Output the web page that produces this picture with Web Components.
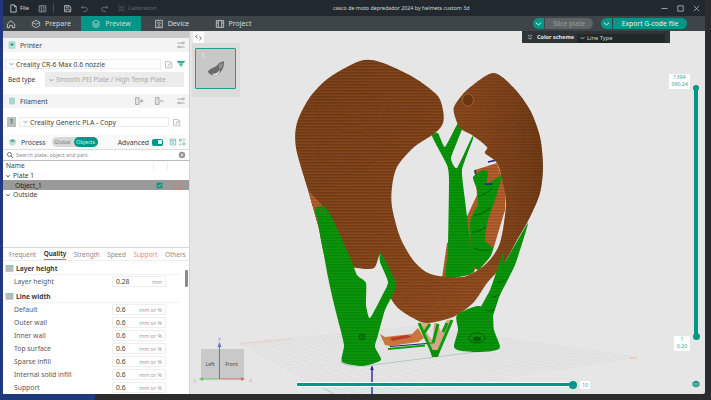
<!DOCTYPE html>
<html>
<head>
<meta charset="utf-8">
<style>
html, body { margin: 0; height: 100%; overflow: hidden; }
body { background: linear-gradient(90deg, #1f3a7c 95px, #2b2c2e 95px); font-family: "Noto Sans", "Open Sans", sans-serif; }
</style>
</head>
<body>
<app-window></app-window>

<script>
const ICONS = {
  file: '<path d="M3 1.500h6l3 3v9H3zM9 1.500v3h3" fill="none" stroke="currentColor" stroke-width="1.300"/>',
  panel: '<path d="M2 3h11v10H2zM5.500 3v10M8 5.500h3M8 8h3M8 10.500h3" fill="none" stroke="currentColor" stroke-width="1.200"/>',
  save: '<path d="M2.500 2.500h8l2.500 2.500v8h-10.500zM5 2.500v3h5v-3M5 13v-4.500h5.500v4.500" fill="none" stroke="currentColor" stroke-width="1.200"/>',
  undo: '<path d="M5 3 2.500 5.500 5 8M2.500 5.500h6a3.500 3.500 0 0 1 0 7h-3" fill="none" stroke="currentColor" stroke-width="1.200"/>',
  redo: '<path d="M10 3l2.500 2.500L10 8M12.500 5.500h-6a3.500 3.500 0 0 0 0 7h3" fill="none" stroke="currentColor" stroke-width="1.200"/>',
  calib: '<path d="M3 4.500V3h1.500M10.500 3H12v1.500M12 10.500V12h-1.500M4.500 12H3v-1.500M5 5h5v5H5z" fill="none" stroke="currentColor" stroke-width="1.100"/>',
  home: '<path d="M2 7.500 7.500 2.500 13 7.500V13H9.500V9.500h-4V13H2z" fill="none" stroke="currentColor" stroke-width="1.200"/>',
  cube: '<path d="M7.500 2 13 5v5l-5.500 3L2 10V5zM2 5l5.500 3L13 5" fill="none" stroke="currentColor" stroke-width="1.100"/>',
  layers: '<path d="M7.500 2 13 5 7.500 8 2 5zM2 7.500l5.500 3 5.500-3M2 10l5.500 3 5.500-3" fill="none" stroke="currentColor" stroke-width="1.100"/>',
  device: '<path d="M2.500 2h10v11h-10zM5 10.500h5M7.500 4.500a1.800 1.800 0 1 0 .01 0" fill="none" stroke="currentColor" stroke-width="1.200"/>',
  project: '<path d="M2 2.500h11v10H2zM5 2.500v10M10 2.500v10M2.500 6h2M10.500 6h2" fill="none" stroke="currentColor" stroke-width="1.200"/>',
  sliders: '<path d="M2 4.500h7M12 4.500h1M2 10.500h1M6 10.500h7" fill="none" stroke="currentColor" stroke-width="1.100"/><circle cx="10.500" cy="4.500" r="1.500" fill="none" stroke="currentColor"/><circle cx="4.500" cy="10.500" r="1.500" fill="none" stroke="currentColor"/>',
  edit: '<path d="M2.500 2.500h8M2.500 2.500v10.500h10.500V6M6.500 9 12 3.500l1 1L7.500 10H6.500z" fill="none" stroke="currentColor" stroke-width="1.200"/>',
  wifi: '<path d="M1.500 3h12l-2.500 3.500h-7zM5 8h5l-1.300 2.200H6.300zM7.500 11v2.500" fill="currentColor" stroke="currentColor" stroke-width=".6"/>',
  printer: '<path d="M2 1.500h11v12H2z" fill="#bfe4de" stroke="#7fbdb3"/><path d="M5 4.500h5v3l-2.500 2-2.500-2z" fill="#12937f"/>',
  filament: '<path d="M3 2h9v11H3z" fill="#bfe4de" stroke="#7fbdb3"/><path d="M5.500 2v11M9.500 2v11" stroke="#7fbdb3" fill="none"/>',
  add: '<path d="M2.500 2.500h5v10h-5zM4.500 5.500h1M4.500 9h1M9 7.500h5M11.500 5v5" fill="none" stroke="currentColor" stroke-width="1.200"/>',
  remove: '<path d="M2.500 2.500h5v10h-5zM4.500 5.500h1M4.500 9h1M9 7.500h5" fill="none" stroke="currentColor" stroke-width="1.200"/>',
  process: '<path d="M7.500 1.500 13 4.500v6l-5.500 3-5.500-3v-6z" fill="#c9dedb"/><path d="M2 4.500l5.500 3 5.500-3-5.500-3z" fill="#5fb3a6"/>',
  table: '<path d="M2.500 2h10v11h-10zM2.500 5h10M5 7.500h5M5 10h5" fill="none" stroke="#3aa090" stroke-width="1"/>',
  arrange: '<path d="M2.500 2.500h3.500v3.500h-3.500zM9 9h3.500v3.500H9zM9 2.500h3.500M2.500 12.500H6M11 5l1.500-1.500M4 10l-1.500 1.500" fill="none" stroke="#3aa090" stroke-width="1.100"/>',
  search: '<circle cx="6.500" cy="6.500" r="3.800" fill="none" stroke="currentColor" stroke-width="1.500"/><path d="m9.500 9.500 3.500 3.500" stroke="currentColor" stroke-width="1.800"/>',
  clear: '<circle cx="7.500" cy="7.500" r="6" fill="currentColor"/><path d="m5 5 5 5m0-5-5 5" stroke="#fff" stroke-width="1.200"/>',
  paint: '<circle cx="7" cy="7.500" r="4.800" fill="none" stroke="#e8743b" stroke-width="1.200" stroke-dasharray="3 1"/><circle cx="11.500" cy="11.500" r="2" fill="#e8743b"/>',
  check: '<path d="M1.500 1.500h12v12h-12z" fill="#12937f"/><path d="m4.500 7.500 2.200 2.200 4-4.200" fill="none" stroke="#fff" stroke-width="1.200"/>',
  heading: '<path d="M1 2h13v11H1z" fill="#c6c6c6"/><path d="M1 2h13v2.500H1z" fill="#7fc4b8"/><path d="M1 6.500h13M1 9h13M1 11.500h13" stroke="#9a9a9a" stroke-width=".7"/>',
  collapse: '<path d="M3.500 3.500 7.500 6.500 11.500 3.500M3.500 8.500 7.500 11.500 11.500 8.500" fill="none" stroke="currentColor" stroke-width="1.200"/>',
  min: '<path d="M2.500 7.500h10" stroke="currentColor" stroke-width="1.200"/>',
  max: '<path d="M3 3h9v9H3z" fill="none" stroke="currentColor" stroke-width="1.200"/>',
  close: '<path d="m3 3 9 9m0-9-9 9" stroke="currentColor" stroke-width="1.200"/>',
  codes: '<path d="M6 3 2.500 6 6 9M9 6l3.500 3L9 12" fill="none" stroke="currentColor" stroke-width="1.200"/>',
  stack: '<path d="M7.500 1 14 4v7l-6.500 3L1 11V4z" fill="#12937f"/><path d="M3 5.500l4.500 2 4.500-2M3 8.500l4.500 2 4.500-2" fill="none" stroke="#fff" stroke-width=".9"/>'
};

// closed curve through the points, k is how round it gets
function curve(pts, k) {
  const n = pts.length;
  let d = `M${pts[0][0]} ${pts[0][1]}`;
  for (let i = 0; i < n; i++) {
    const p0 = pts[(i + n - 1) % n], p1 = pts[i], p2 = pts[(i + 1) % n], p3 = pts[(i + 2) % n];
    const c1 = [p1[0] + (p2[0] - p0[0]) * k, p1[1] + (p2[1] - p0[1]) * k];
    const c2 = [p2[0] - (p3[0] - p1[0]) * k, p2[1] - (p3[1] - p1[1]) * k];
    d += `C${c1[0].toFixed(1)} ${c1[1].toFixed(1)} ${c2[0].toFixed(1)} ${c2[1].toFixed(1)} ${p2[0]} ${p2[1]}`;
  }
  return d + 'Z';
}

// small icon element, 15 unit grid
class UiIcon extends HTMLElement {
  connectedCallback() {
    const size = this.getAttribute('size') || 10;
    this.attachShadow({mode: 'open'}).innerHTML = `
      <style>:host { display: inline-flex; flex: none; width: ${size}px; height: ${size}px; }</style>
      <svg width="${size}" height="${size}" viewBox="0 0 15 15">${ICONS[this.getAttribute('name')] || ''}</svg>`;
  }
}

class TitleBar extends HTMLElement {
  connectedCallback() {
    this.attachShadow({mode: 'open'}).innerHTML = `
      <style>
        :host { display: flex; align-items: center; height: 16px; background: #22292e; color: #d8dcdc; font-size: 5.600px; position: relative; }
        .left { display: flex; align-items: center; padding-left: 6px; width: 324px; box-sizing: content-box; flex: none; }
        .file { margin-left: 2px; margin-right: 9px; }
        .sep { width: 1px; height: 10px; background: #454b4f; margin: 0 9px 0 6px; }
        ui-icon.dim { color: #7d8487; margin-right: 11px; }
        .cal { color: #62696c; margin-left: 2px; }
        .title { flex: none; width: 135px; text-align: center; font-size: 5.300px; white-space: nowrap; color: #d5d9d9; }
        .win { margin-left: auto; display: flex; gap: 7px; padding-right: 4px; color: #c8cccc; }
      </style>
      <div class="left">
        <ui-icon name="file" size="9"></ui-icon><span class="file">File</span>
        <ui-icon name="panel" size="9" style="color:#a9aeb0"></ui-icon>
        <span class="sep"></span>
        <ui-icon name="save" size="9" style="color:#c8cccc;margin-right:8px"></ui-icon>
        <ui-icon class="dim" name="undo" size="9"></ui-icon>
        <ui-icon class="dim" name="redo" size="9" style="margin-right:8px"></ui-icon>
        <ui-icon name="calib" size="9" style="color:#62696c"></ui-icon><span class="cal">Calibration</span>
      </div>
      <div class="title">casco de moto depredador 2024 by helmets custom 3d</div>
      <div class="win">
        <ui-icon name="min" size="9"></ui-icon><ui-icon name="max" size="9"></ui-icon><ui-icon name="close" size="9"></ui-icon>
      </div>`;
  }
}

class NavTab extends HTMLElement {
  connectedCallback() {
    const on = this.hasAttribute('active');
    this.attachShadow({mode: 'open'}).innerHTML = `
      <style>
        :host { display: flex; align-items: center; justify-content: center; gap: 4px; height: 100%; font-size: 7px; color: #d7dbdb;
          background: ${on ? '#009688' : 'transparent'}; width: ${this.getAttribute('w')}px; }
      </style>
      <ui-icon name="${this.getAttribute('icon')}" size="10"></ui-icon><span><slot></slot></span>`;
  }
}

class ActionButton extends HTMLElement {
  connectedCallback() {
    const off = this.hasAttribute('disabled');
    this.attachShadow({mode: 'open'}).innerHTML = `
      <style>
        :host { display: flex; height: 11px; width: ${this.getAttribute('w')}px; border-radius: 6px; overflow: hidden; font-size: 6.800px; }
        .arrow { width: 11px; background: #009688; display: flex; align-items: center; justify-content: center; margin-right: 1px; }
        .label { flex: 1; display: flex; align-items: center; justify-content: center; line-height: 11px;
          background: ${off ? '#5e6365' : '#009688'}; color: ${off ? '#9b9fa0' : '#e8f5f3'}; }
        svg { display: block; }
      </style>
      <div class="arrow"><svg width="7" height="4" viewBox="0 0 7 4"><path d="M.8.6 3.500 3 6.200.6" fill="none" stroke="#e8f5f3" stroke-width="1"/></svg></div>
      <div class="label"><slot></slot></div>`;
  }
}

class TabBar extends HTMLElement {
  connectedCallback() {
    this.attachShadow({mode: 'open'}).innerHTML = `
      <style>
        :host { display: flex; align-items: center; height: 15px; background: #3d4548; position: relative; }
        .home { width: 15px; padding-left: 3px; color: #d7dbdb; display: flex; }
        .actions { position: absolute; left: 530px; top: 2px; display: flex; gap: 8px; }
      </style>
      <div class="home"><ui-icon name="home" size="10"></ui-icon></div>
      <nav-tab icon="cube" w="60">Prepare</nav-tab>
      <nav-tab icon="layers" w="60" active>Preview</nav-tab>
      <nav-tab icon="device" w="61">Device</nav-tab>
      <nav-tab icon="project" w="62">Project</nav-tab>
      <div class="actions">
        <action-button w="60" disabled>Slice plate</action-button>
        <action-button w="86">Export G-code file</action-button>
      </div>`;
  }
}

class SectionHead extends HTMLElement {
  connectedCallback() {
    this.attachShadow({mode: 'open'}).innerHTML = `
      <style>
        :host { display: flex; align-items: center; height: 14px; background: #f4f4f4; color: #3c4144; font-size: 6.800px; padding: 0 3px 0 5px; gap: 4px; }
        .end { margin-left: auto; display: flex; gap: 6px; color: #8b9092; }
      </style>
      <ui-icon name="${this.getAttribute('icon')}" size="8"></ui-icon>
      <span>${this.getAttribute('label')}</span>
      <div class="end"><slot></slot></div>`;
  }
}

class SelectBox extends HTMLElement {
  connectedCallback() {
    const off = this.hasAttribute('disabled');
    this.attachShadow({mode: 'open'}).innerHTML = `
      <style>
        :host { display: flex; align-items: center; flex: 1; min-width: 0; box-sizing: border-box; gap: 2px; padding-left: 3px; white-space: nowrap;
          height: ${off ? 15 : 10}px; font-size: ${off ? 6.600 : 6.800}px; color: ${off ? '#a9a9a9' : '#3c4144'};
          background: ${off ? '#ececec' : '#fff'}; border: 1px solid #ececec; }
        svg { flex: none; }
      </style>
      <svg width="5" height="4" viewBox="0 0 5 4"><path d="M.5 1 2.500 3 4.500 1" fill="none" stroke="#8a8a8a" stroke-width=".8"/></svg>
      <slot></slot>`;
  }
}

class ModeSwitch extends HTMLElement {
  connectedCallback() {
    this.attachShadow({mode: 'open'}).innerHTML = `
      <style>
        :host { display: flex; width: 46px; height: 10px; border-radius: 5px; background: #d8d8d8; font-size: 5.400px; line-height: 10px; margin-left: 6px; }
        span { flex: 1; text-align: center; color: #7e7e7e; border-radius: 5px; }
        .on { background: #009688; color: #d8f0ec; flex: 0 0 24px; }
      </style>
      <span>Global</span><span class="on">Objects</span>`;
  }
}

class ListRow extends HTMLElement {
  connectedCallback() {
    const sel = this.hasAttribute('selected');
    this.attachShadow({mode: 'open'}).innerHTML = `
      <style>
        :host { display: flex; align-items: center; height: 9.700px; font-size: 6.600px; color: ${sel ? '#222' : '#3c4144'};
          background: ${sel ? '#9a9a9a' : '#fff'}; padding-left: ${this.getAttribute('indent') || 3}px; position: relative; }
        svg { margin-right: 3px; }
        .end { margin-left: auto; display: flex; gap: 10px; padding-right: 7px; align-items: center; }
        .cols { margin-left: auto; display: flex; gap: 13px; padding-right: 21px; }
        .cols i { width: 1px; height: 8px; background: #efefef; }
      </style>
      ${this.hasAttribute('caret') ? '<svg width="4" height="4" viewBox="0 0 4 4"><path d="M.3 1 2 3 3.700 1" fill="none" stroke="#444" stroke-width=".8"/></svg>' : ''}
      <slot></slot>
      ${this.hasAttribute('head') ? '<div class="cols"><i></i><i></i></div>' : '<div class="end"><slot name="end"></slot></div>'}`;
  }
}

class ParamRow extends HTMLElement {
  connectedCallback() {
    this.attachShadow({mode: 'open'}).innerHTML = `
      <style>
        :host { display: flex; align-items: center; height: 13px; font-size: 6.800px; color: #56595b; padding-left: 11px; }
        .label { width: 98px; flex: none; white-space: nowrap; }
        .box { width: 54px; height: 11px; box-sizing: border-box; border: 1px solid #eeeeee; display: flex; align-items: center; padding: 0 3px; color: #444; background: #fff; border-radius: 1px; }
        .unit { margin-left: auto; font-size: 5.400px; color: #9b9b9b; white-space: nowrap; }
      </style>
      <span class="label"><slot></slot></span>
      <div class="box"><span>${this.getAttribute('value')}</span><span class="unit">${this.getAttribute('unit')}</span></div>`;
  }
}

class ParamHead extends HTMLElement {
  connectedCallback() {
    this.attachShadow({mode: 'open'}).innerHTML = `
      <style>
        :host { display: flex; align-items: center; gap: 2px; height: 14px; font-size: 6.600px; font-weight: 700; color: #3c4144; padding-left: 2px; position: relative; }
        i { position: absolute; left: 5px; right: 9px; bottom: 0; height: 1px; background: #f0f0f0; }
      </style>
      <ui-icon name="heading" size="9"></ui-icon><slot></slot><i></i>`;
  }
}

class SidePanel extends HTMLElement {
  connectedCallback() {
    const rows = ['Default', 'Outer wall', 'Inner wall', 'Top surface', 'Sparse infill', 'Internal solid infill', 'Support'];
    this.attachShadow({mode: 'open'}).innerHTML = `
      <style>
        :host { display: flex; flex-direction: column; width: 187px; flex: none; background: #fff; overflow: hidden; border-right: 1px solid #d2d2d2; box-sizing: border-box; position: relative; }
        .strip { height: 7px; background: #c9c9c9; flex: none; }
        .printer { display: flex; align-items: center; gap: 3px; padding: 7px 3px 0 2px; }
        .bed { display: flex; align-items: center; padding: 3px 5px 0 5px; font-size: 6.600px; color: #3c4144; }
        .bed span { width: 37px; flex: none; }
        .fil { display: flex; align-items: center; gap: 3px; padding: 9px 8px 0 4px; }
        .num { width: 9px; height: 10px; background: #bdbdbd; font-size: 6.400px; color: #333; text-align: center; line-height: 10px; flex: none; }
        .gray { color: #a8a8a8; }
        .proc { display: flex; align-items: center; height: 14px; margin-top: 8px; padding: 0 3px 0 5px; font-size: 6.800px; color: #3c4144; background: #fafafa; }
        .proc .p { margin-left: 4px; }
        .proc .adv { margin-left: auto; margin-right: 3px; }
        .sw { width: 11px; height: 7px; border-radius: 2px; background: #009688; margin-right: 6px; position: relative; }
        .sw::after { content: ""; position: absolute; right: 1.500px; top: 1.500px; width: 4px; height: 4px; background: #dff; border-radius: 1px; }
        .search { display: flex; align-items: center; height: 10px; border-top: 1px solid #ddd; border-bottom: 1px solid #bbb; padding: 0 3px; gap: 2px; font-size: 5.300px; color: #8e8e8e; }
        .search ui-icon:last-child { margin-left: auto; color: #8f9496; }
        .list { height: 86px; flex: none; border-bottom: 1px solid #d8d8d8; background: #fff; }
        .tabs { display: flex; height: 12px; align-items: center; font-size: 6.400px; color: #8a8a8a; padding-left: 6px; gap: 7.500px; border-bottom: 1px solid #eeeeee; flex: none; white-space: nowrap; }
        .tabs span.cur { color: #222; font-weight: 600; border-bottom: 1px solid #e8693a; line-height: 10px; }
        .tabs span.warn { color: #ef8b6a; }
        .params { flex: 1; overflow: hidden; position: relative; }
        .second { margin-top: 1px; }
        .bar { position: absolute; left: 182px; top: 9px; width: 3px; height: 17px; background: #8a8a8a; border-radius: 1px; }
      </style>
      <div class="strip"></div>
      <section-head icon="printer" label="Printer"><ui-icon name="sliders" size="10"></ui-icon></section-head>
      <div class="printer">
        <select-box>Creality CR-6 Max 0.6 nozzle</select-box>
        <ui-icon name="edit" size="9" class="gray"></ui-icon>
        <ui-icon name="wifi" size="10" style="color:#3aa899"></ui-icon>
      </div>
      <div class="bed"><span>Bed type</span><select-box disabled>Smooth PEI Plate / High Temp Plate</select-box></div>
      <section-head icon="filament" label="Filament" style="margin-top:7px">
        <ui-icon name="add" size="10" style="margin-right:4px"></ui-icon>
        <ui-icon name="remove" size="10" style="margin-right:6px"></ui-icon>
        <ui-icon name="sliders" size="10"></ui-icon>
      </section-head>
      <div class="fil">
        <div class="num">1</div>
        <select-box>Creality Generic PLA - Copy</select-box>
        <ui-icon name="edit" size="9" class="gray"></ui-icon>
      </div>
      <div class="proc">
        <ui-icon name="process" size="9"></ui-icon><span class="p">Process</span>
        <mode-switch></mode-switch>
        <span class="adv">Advanced</span><span class="sw"></span>
        <ui-icon name="table" size="8" style="margin-right:1px"></ui-icon><ui-icon name="arrange" size="8"></ui-icon>
      </div>
      <div class="search"><ui-icon name="search" size="8" style="color:#555"></ui-icon><span>Search plate, object and part.</span><ui-icon name="clear" size="8"></ui-icon></div>
      <div class="list">
        <list-row head>Name</list-row>
        <list-row caret>Plate 1</list-row>
        <list-row selected indent="12">Object_1<ui-icon slot="end" name="check" size="7"></ui-icon><ui-icon slot="end" name="paint" size="9"></ui-icon></list-row>
        <list-row caret>Outside</list-row>
      </div>
      <div class="tabs"><span>Frequent</span><span class="cur">Quality</span><span>Strength</span><span>Speed</span><span class="warn">Support</span><span>Others</span></div>
      <div class="params">
        <param-head>Layer height</param-head>
        <param-row value="0.28" unit="mm">Layer height</param-row>
        <param-head class="second">Line width</param-head>
        ${rows.map(r => `<param-row value="0.6" unit="mm or %">${r}</param-row>`).join('')}
        <div class="bar"></div>
      </div>`;
  }
}

class ModelScene extends HTMLElement {
  connectedCallback() {
    // bed grid from its four corners
    const A = [240, 343], B = [420, 326], C = [637, 357], D = [349, 403];
    const mix = (p, q, t) => [p[0] + (q[0] - p[0]) * t, p[1] + (q[1] - p[1]) * t];
    let grid = '';
    for (let i = 0; i <= 26; i++) {
      const t = i / 26;
      const a = mix(A, B, t), b = mix(D, C, t), c = mix(A, D, t), d = mix(B, C, t);
      grid += `M${a[0].toFixed(1)} ${a[1].toFixed(1)}L${b[0].toFixed(1)} ${b[1].toFixed(1)}M${c[0].toFixed(1)} ${c[1].toFixed(1)}L${d[0].toFixed(1)} ${d[1].toFixed(1)}`;
    }
    const shell = curve([[296,148],[297,123],[310,97],[330,77],[360,61],[380,62],[413,77],[437,95],[443,110],[443,123],[435,133],[413,148],[397,167],[392,187],[392,207],[400,237],[413,260],[428,273],[447,277],[467,276],[487,263],[500,243],[506,205],[503,183],[497,163],[485,153],[487,147],[472,135],[460,128],[454,113],[455,105],[467,90],[493,73],[513,87],[530,110],[540,137],[543,167],[540,193],[530,217],[517,240],[503,265],[487,283],[473,303],[453,317],[427,323],[413,318],[397,307],[387,290],[392,280],[381,254],[374,268],[357,268],[328,262],[318,225],[308,190]], .14);
    const column = curve([[432,136],[438,133],[445,147],[458,123],[462,129],[451,158],[457,168],[472,137],[473,139],[462,170],[465,200],[470,240],[474,272],[446,278],[448,250],[449,180],[447,165]], .08);
    const cluster = curve([[473,177],[483,170],[488,172],[487,184],[502,175],[498,190],[495,200],[488,220],[485,240],[493,248],[490,257],[478,270],[472,260],[470,223],[475,210],[478,205],[477,190]], .1);
    const leftLeg = curve([[315,208],[325,207],[333,220],[350,257],[357,275],[366,283],[366,305],[370,318],[382,296],[388,282],[380,262],[381,253],[396,285],[385,310],[378,335],[375,347],[381,360],[363,366],[342,362],[344,345],[338,320],[333,300],[328,277],[318,223]], .1);
    const spike = curve([[504,250],[505,262],[528,223],[515,265],[500,295],[492,318],[482,324],[477,315],[490,290],[497,270]], .08);
    const rightLeg = curve([[457,315],[478,306],[492,313],[494,330],[500,347],[492,351],[477,352],[462,351],[454,347],[458,330]], .12);
    this.attachShadow({mode: 'open'}).innerHTML = `
      <style>:host { position: absolute; inset: 0; display: block; } svg { display: block; }</style>
      <svg width="515" height="363" viewBox="190 31 515 363">
        <defs>
          <pattern id="br" width="6" height="1.500" patternUnits="userSpaceOnUse"><rect width="6" height="1.500" fill="#884a1e"/><rect width="6" height=".75" fill="#6a3613"/></pattern>
          <pattern id="brl" width="6" height="1.500" patternUnits="userSpaceOnUse"><rect width="6" height="1.500" fill="#b9652f"/><rect width="6" height=".6" fill="#94491f"/></pattern>
          <pattern id="gr" width="6" height="1.500" patternUnits="userSpaceOnUse"><rect width="6" height="1.500" fill="#0b9c0b"/><rect width="6" height=".6" fill="#067c06"/></pattern>
          <clipPath id="shellClip"><path d="${shell}"/></clipPath>
          <linearGradient id="shade" x1="0" y1="0" x2=".7" y2="1"><stop offset="0" stop-color="#3c2008" stop-opacity=".1"/><stop offset=".6" stop-color="#b55f2a" stop-opacity=".08"/><stop offset="1" stop-color="#c46a30" stop-opacity=".3"/></linearGradient>
          <linearGradient id="shadeR" x1="0" y1="0" x2="1" y2=".2"><stop offset="0" stop-color="#b55f2a" stop-opacity=".15"/><stop offset="1" stop-color="#3a1e06" stop-opacity=".32"/></linearGradient>
        </defs>
        <path d="${grid}" stroke="#dbdbdb" stroke-width=".5" fill="none"/>
        <path d="M240 344 290 339" stroke="#efc9b4" stroke-width="1.200" stroke-dasharray="2 1"/>
        <path d="M630 358h7" stroke="#efc9b4" stroke-width="1.500"/>
        <path d="M323 388 336 395" stroke="#9fcdbb" stroke-width=".8"/>
        <path d="M372 367V394" stroke="#2a2a96" stroke-width="1.400"/>
        <path d="M372 365l-1.800 5h3.600z" fill="#2a2a96"/>
        <path d="M340 362C344 366 360 368 380 364L500 349 497 345" fill="none" stroke="#a9c3b9" stroke-width=".8"/>

        <!-- raft under the helmet -->
        <path d="M380 334 385 337 412 334 418 328 424 338 418 342 390 346 385 345z" fill="#c8763a"/>
        <path d="M390 338 392 341 412 337 407 335z" fill="#b93a2a"/>
        <path d="M390 346.500 433 343" stroke="#20208a" stroke-width="1.200"/>
        <path d="M388 349 425 345.500" stroke="#0a9e0a" stroke-width="2"/>

        <!-- cavity behind the ring -->
        <path d="M475 170 497 163 506 190 505 210 493 250 470 275 442 278 447 243 456 240 470 210 477 195z" fill="url(#brl)"/>

        <!-- centre column -->
        <path d="${column}" fill="url(#gr)"/>

        <!-- cluster in the cavity -->
        <path d="${cluster}" fill="url(#gr)"/>
        <path d="M478 196q8-1 14-8M474 215q8 0 16-7M472 232q7 0 14-5M474 248q5 3 16 2" stroke="#056505" stroke-width="1.100" fill="none"/>
        <path d="M488 162 497 160M475 170l.5 4M485 184h7" stroke="#23238f" stroke-width="1.700" fill="none"/>

        <!-- helmet shell -->
        <path d="${shell}" fill="url(#br)"/>
        <g clip-path="url(#shellClip)">
          <rect x="290" y="55" width="260" height="275" fill="url(#shade)"/>
          <rect x="452" y="65" width="95" height="200" fill="url(#shadeR)"/>
          <g fill="none" stroke="#5f300f" stroke-width=".7" opacity=".28">
            <ellipse cx="352" cy="108" rx="26" ry="17"/><ellipse cx="352" cy="108" rx="15" ry="9"/><ellipse cx="352" cy="108" rx="36" ry="24"/>
            <ellipse cx="350" cy="150" rx="32" ry="18"/><ellipse cx="420" cy="300" rx="26" ry="14"/><ellipse cx="420" cy="300" rx="14" ry="7"/>
            <ellipse cx="420" cy="300" rx="38" ry="20"/><ellipse cx="510" cy="140" rx="14" ry="20"/><ellipse cx="490" cy="108" rx="9" ry="12"/>
          </g>
        </g>
        <ellipse cx="468" cy="100" rx="5.500" ry="6" fill="#6a3510" stroke="#a9703c" stroke-width=".7"/>
        <path d="M308 190 318 225 328 262 340 264 322 205z" fill="url(#brl)"/>

        <!-- tree under the shell -->
        <path d="M420 323 434 352 437 352 452 320 447 320 441 332 437 323 434 323 433 341 426 332 430 323z" fill="#c8763a" opacity=".55"/>
        <path d="M419 323 433 354M452 320 437 355M430 324 424 333M438 324 433 343M447 323 443 332" stroke="#0b9c0b" stroke-width="3" fill="none"/>
        <path d="M430 350 440 350 438 357 432 357z" fill="#0a8f0a"/>

        <!-- right leg and spike -->
        <path d="${rightLeg}" fill="url(#gr)"/>
        <ellipse cx="477" cy="338" rx="8" ry="5" fill="none" stroke="#045e04" stroke-width="1"/>
        <ellipse cx="477" cy="339" rx="4" ry="2.500" fill="#045e04"/>
        <path d="${spike}" fill="url(#gr)"/>
        <path d="M497 282q6 1 9-3M491 296q5 2 9-2M486 310q5 3 9-1" stroke="#056505" stroke-width="1" fill="none"/>

        <!-- left leg with spike -->
        <path d="${leftLeg}" fill="url(#gr)"/>
        <path d="M319 211h4" stroke="#8b4b20" stroke-width="1.500"/>
        <circle cx="362" cy="337" r="3" fill="#067a06" stroke="#045e04"/>
      </svg>`;
  }
}

class LayerSlider extends HTMLElement {
  connectedCallback() {
    const v = this.hasAttribute('vertical');
    this.attachShadow({mode: 'open'}).innerHTML = `
      <style>
        :host { position: absolute; display: block; background: #009688; ${v ? 'width: 4px;' : 'height: 3px; outline: 1px solid #fff;'} }
        i { position: absolute; width: 8px; height: 8px; border-radius: 50%; background: #009688; }
      </style>
      ${v ? '<i style="top:-4px;width:6px;height:6px;left:-1px"></i><i style="bottom:-4px;width:7px;height:7px;left:-1.500px"></i>' : '<i style="right:-3px;top:-2.500px"></i>'}`;
  }
}

class SliderTag extends HTMLElement {
  connectedCallback() {
    this.attachShadow({mode: 'open'}).innerHTML = `
      <style>:host { position: absolute; display: block; background: #fff; color: #3ea99a; font-size: 5.400px; line-height: 7.400px; text-align: center; box-sizing: border-box; }</style>
      <slot></slot>`;
  }
}

class NavCube extends HTMLElement {
  connectedCallback() {
    this.attachShadow({mode: 'open'}).innerHTML = `
      <style>
        :host { position: absolute; left: 3px; top: 304px; width: 62px; height: 50px; display: block; }
        .face { position: absolute; top: 14px; height: 30px; background: #c9c9c9; font-size: 5px; color: #4a4a4a; line-height: 30px; text-align: center; }
        svg { position: absolute; left: 0; top: 0; }
        text { font: 6px "Noto Sans", sans-serif; }
      </style>
      <div class="face" style="left:8px;width:18px">Left</div>
      <div class="face" style="left:26.500px;width:24px">Front</div>
      <svg width="62" height="50" viewBox="0 0 62 50">
        <path d="M26.500 44V10" stroke="#6d6fd0" stroke-width="1"/><path d="M26.500 7l-2 5h4z" fill="#6d6fd0"/>
        <path d="M26.500 44H50" stroke="#cf7070" stroke-width="1"/><path d="M52 44l-4-2v4z" fill="#cf7070"/>
        <path d="M26.500 44H8" stroke="#66c266" stroke-width="1"/><path d="M6 44l4-2v4z" fill="#66c266"/>
        <text x="25" y="6" fill="#8a8ad8">z</text><text x="0" y="47" fill="#9ad09a">y</text><text x="56" y="47" fill="#d89a9a">x</text>
      </svg>`;
  }
}

class PlateThumb extends HTMLElement {
  connectedCallback() {
    this.attachShadow({mode: 'open'}).innerHTML = `
      <style>
        :host { position: absolute; left: 2px; top: 12px; width: 48px; height: 54px; background: #dcdcdc; display: block; }
        .t { position: absolute; left: 3px; top: 5px; width: 41px; height: 41px; box-sizing: border-box; border: 1px solid #1f9d8d; background: #c8c8c8; border-radius: 1px; }
        span { position: absolute; left: 5px; top: 2px; color: #f2f2f2; font-size: 7px; }
        svg { position: absolute; left: 11px; top: 11px; }
      </style>
      <div class="t"><span>1</span>
        <svg width="18" height="18" viewBox="0 0 20 20">
          <path d="M1 13C3 9 8 9 11 6 14 3 17 1 19 2 19 8 17 13 12 16 8 18 3 17 1 13z" fill="#6a6a6a"/>
          <path d="M6 15C9 16 12 14 14 11 15 13 12 17 9 17 7 17 6 16 6 15z" fill="#e4e4e4"/>
          <path d="M13 5 18 3 17 8 14 11z" fill="#8f8f8f"/>
        </svg>
      </div>`;
  }
}

class ColorScheme extends HTMLElement {
  connectedCallback() {
    this.attachShadow({mode: 'open'}).innerHTML = `
      <style>
        :host { position: absolute; left: 332px; top: 0; width: 148px; height: 12px; background: #2f3437; color: #e6e6e6; display: flex; align-items: center; font-size: 5.700px; box-sizing: border-box; padding-left: 4px; }
        b { margin: 0 3px 0 3px; font-size: 5.500px; font-weight: 700; white-space: nowrap; }
        .sel { background: #22272a; height: 9px; width: 88px; display: flex; align-items: center; gap: 2px; padding-left: 3px; box-sizing: border-box; color: #d4d4d4; margin-top: 2px; }
      </style>
      <ui-icon name="collapse" size="8"></ui-icon><b>Color scheme</b>
      <div class="sel"><svg width="5" height="4" viewBox="0 0 5 4"><path d="M.5 1 2.500 3 4.500 1" fill="none" stroke="#ccc" stroke-width=".8"/></svg>Line Type</div>`;
  }
}

class PreviewView extends HTMLElement {
  connectedCallback() {
    this.attachShadow({mode: 'open'}).innerHTML = `
      <style>
        :host { flex: 1; position: relative; background: #e6e6e6; overflow: hidden; display: block; }
        .toggle { position: absolute; left: 3px; top: 1px; width: 11px; height: 11px; background: #fff; color: #444; display: flex; align-items: center; justify-content: center; }
      </style>
      <model-scene></model-scene>
      <div class="toggle"><ui-icon name="codes" size="9"></ui-icon></div>
      <plate-thumb></plate-thumb>
      <nav-cube></nav-cube>
      <color-scheme></color-scheme>
      <layer-slider vertical style="left:504px;top:58px;height:247px"></layer-slider>
      <slider-tag style="left:479px;top:43px;width:21px;height:15px">1394<br>390.24</slider-tag>
      <slider-tag style="left:484px;top:305px;width:16px;height:15px">1<br>0.20</slider-tag>
      <layer-slider style="left:107px;top:352px;width:277px"></layer-slider>
      <slider-tag style="left:390px;top:349.500px;width:10px;height:8px;line-height:8px">10</slider-tag>
      <ui-icon name="stack" size="8" style="position:absolute;left:502px;top:349px"></ui-icon>`;
  }
}

class AppWindow extends HTMLElement {
  connectedCallback() {
    this.attachShadow({mode: 'open'}).innerHTML = `
      <style>
        :host { display: flex; flex-direction: column; margin-left: 3px; width: 702px; height: 394px; overflow: hidden; border-radius: 0 0 2px 0; }
        .main { flex: 1; display: flex; min-height: 0; }
      </style>
      <title-bar></title-bar>
      <tab-bar></tab-bar>
      <div class="main"><side-panel></side-panel><preview-view></preview-view></div>`;
  }
}

customElements.define('ui-icon', UiIcon);
customElements.define('title-bar', TitleBar);
customElements.define('nav-tab', NavTab);
customElements.define('action-button', ActionButton);
customElements.define('tab-bar', TabBar);
customElements.define('section-head', SectionHead);
customElements.define('select-box', SelectBox);
customElements.define('mode-switch', ModeSwitch);
customElements.define('list-row', ListRow);
customElements.define('param-row', ParamRow);
customElements.define('param-head', ParamHead);
customElements.define('side-panel', SidePanel);
customElements.define('model-scene', ModelScene);
customElements.define('layer-slider', LayerSlider);
customElements.define('slider-tag', SliderTag);
customElements.define('nav-cube', NavCube);
customElements.define('plate-thumb', PlateThumb);
customElements.define('color-scheme', ColorScheme);
customElements.define('preview-view', PreviewView);
customElements.define('app-window', AppWindow);
</script>
</body>
</html>
